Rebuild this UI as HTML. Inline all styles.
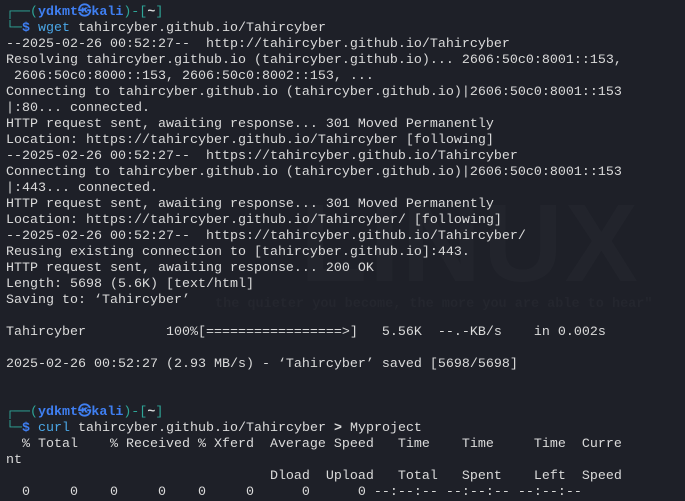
<!DOCTYPE html>
<html><head><meta charset="utf-8"><style>
html,body{margin:0;padding:0;}
body{width:685px;height:498px;overflow:hidden;background:#1e2028;position:relative;}
.wm{position:absolute;left:300px;top:180px;font:bold 110px "Liberation Sans",sans-serif;color:#22242c;letter-spacing:2px;white-space:nowrap;}
.wm2{position:absolute;left:215px;top:297px;font:bold 13.5px "Liberation Mono",monospace;color:#24262e;white-space:nowrap;}
pre{position:absolute;left:6px;top:5px;margin:0;font-family:"Liberation Mono","DejaVu Sans Mono",monospace;font-size:13.33px;line-height:16px;color:#dadada;}
.f{color:#2ea597}.n{color:#3f7ff2;font-weight:bold}.c{color:#4aa6e6}
</style></head><body>
<div class="wm">LINUX</div>
<div class="wm2">the quieter you become, the more you are able to hear"</div>
<pre><span class="f">┌──(</span><span class="n">ydkmt㉿kali</span><span class="f">)-[</span><span style="font-weight:bold">~</span><span class="f">]</span>
<span class="f">└─</span><span class="n">$</span> <span class="c">wget</span> tahircyber.github.io/Tahircyber
--2025-02-26 00:52:27--  http://tahircyber.github.io/Tahircyber
Resolving tahircyber.github.io (tahircyber.github.io)... 2606:50c0:8001::153,
 2606:50c0:8000::153, 2606:50c0:8002::153, ...
Connecting to tahircyber.github.io (tahircyber.github.io)|2606:50c0:8001::153
|:80... connected.
HTTP request sent, awaiting response... 301 Moved Permanently
Location: https://tahircyber.github.io/Tahircyber [following]
--2025-02-26 00:52:27--  https://tahircyber.github.io/Tahircyber
Connecting to tahircyber.github.io (tahircyber.github.io)|2606:50c0:8001::153
|:443... connected.
HTTP request sent, awaiting response... 301 Moved Permanently
Location: https://tahircyber.github.io/Tahircyber/ [following]
--2025-02-26 00:52:27--  https://tahircyber.github.io/Tahircyber/
Reusing existing connection to [tahircyber.github.io]:443.
HTTP request sent, awaiting response... 200 OK
Length: 5698 (5.6K) [text/html]
Saving to: ‘Tahircyber’

Tahircyber          100%[=================>]   5.56K  --.-KB/s    in 0.002s

2025-02-26 00:52:27 (2.93 MB/s) - ‘Tahircyber’ saved [5698/5698]


<span class="f">┌──(</span><span class="n">ydkmt㉿kali</span><span class="f">)-[</span><span style="font-weight:bold">~</span><span class="f">]</span>
<span class="f">└─</span><span class="n">$</span> <span class="c">curl</span> tahircyber.github.io/Tahircyber <span style="font-weight:bold">&gt;</span> Myproject
  % Total    % Received % Xferd  Average Speed   Time    Time     Time  Curre
nt
                                 Dload  Upload   Total   Spent    Left  Speed
  0     0    0     0    0     0      0      0 --:--:-- --:--:-- --:--:--</pre>
</body></html>
